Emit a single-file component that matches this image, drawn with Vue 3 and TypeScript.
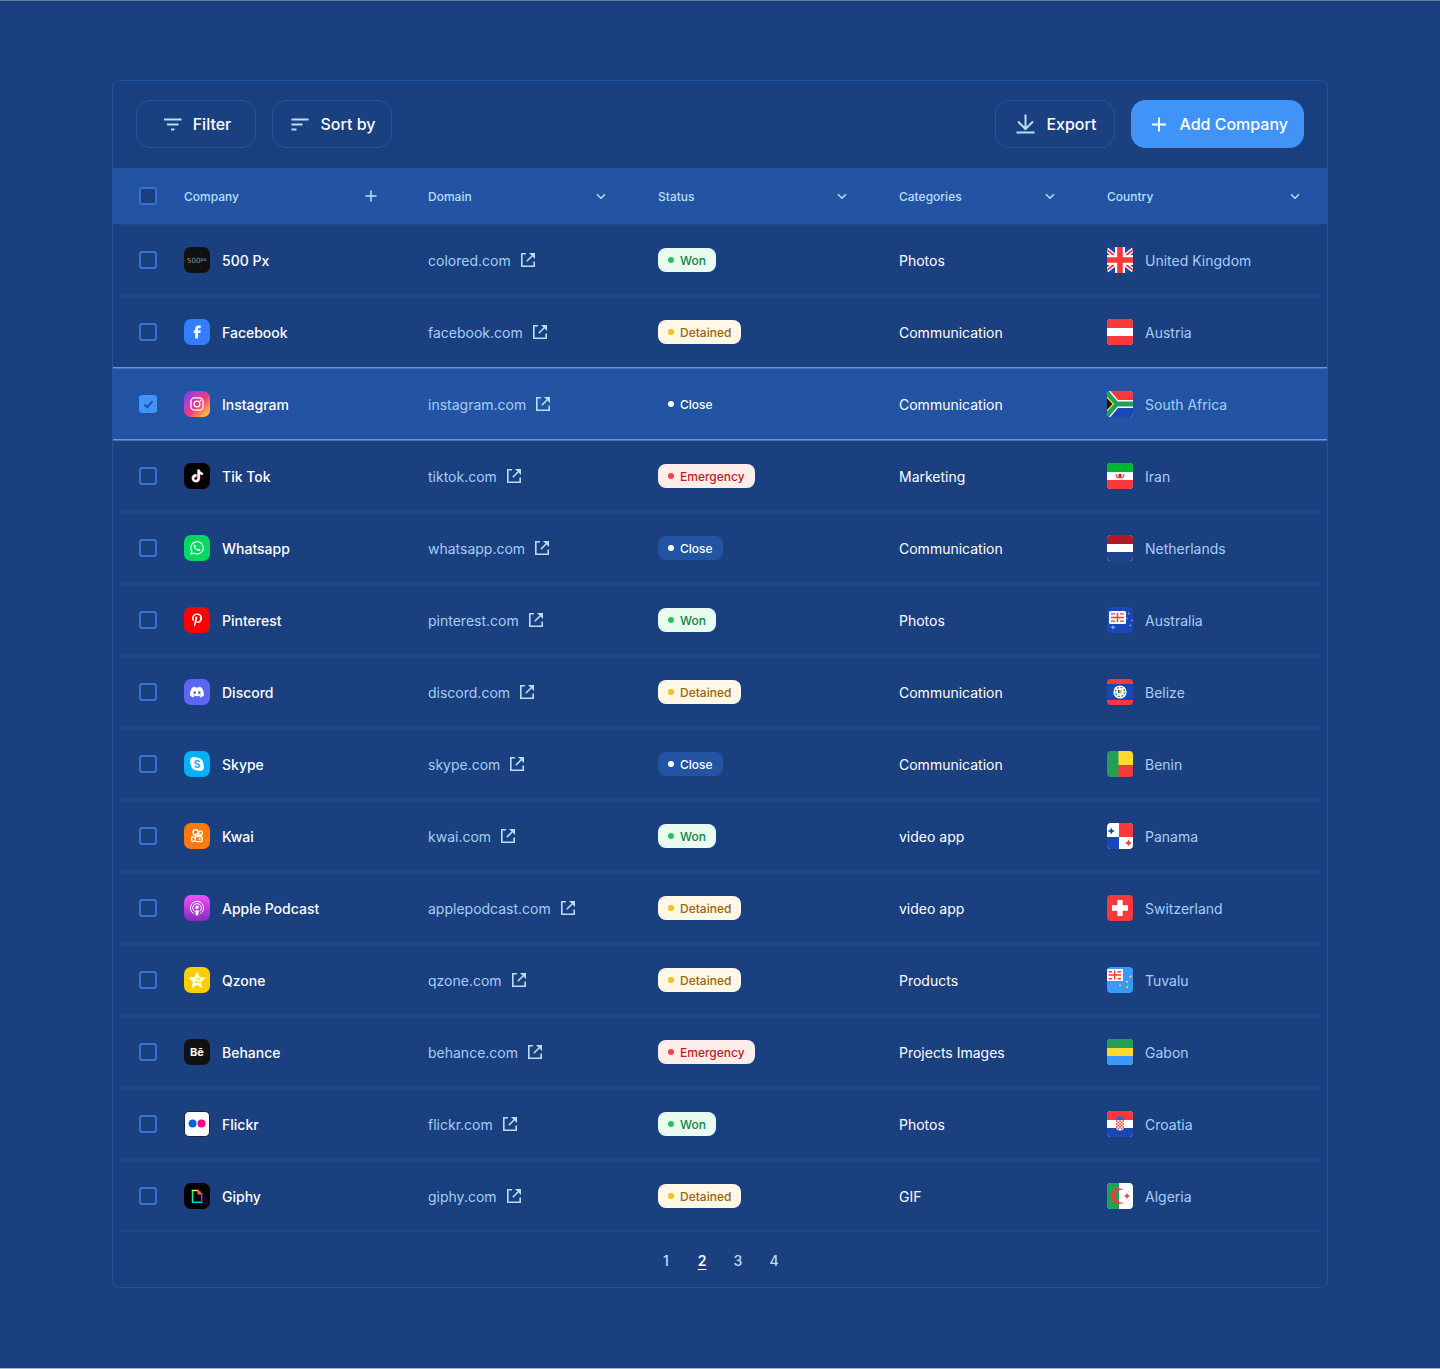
<script setup lang="ts">
import { computed, ref } from 'vue'

type Status = 'Won' | 'Detained' | 'Close' | 'Emergency'

interface Company {
  name: string
  logo: string
  domain: string
  status: Status
  category: string
  country: string
}

const companies: Company[] = [
  { name: '500 Px', logo: 'px500', domain: 'colored.com', status: 'Won', category: 'Photos', country: 'United Kingdom' },
  { name: 'Facebook', logo: 'facebook', domain: 'facebook.com', status: 'Detained', category: 'Communication', country: 'Austria' },
  { name: 'Instagram', logo: 'instagram', domain: 'instagram.com', status: 'Close', category: 'Communication', country: 'South Africa' },
  { name: 'Tik Tok', logo: 'tiktok', domain: 'tiktok.com', status: 'Emergency', category: 'Marketing', country: 'Iran' },
  { name: 'Whatsapp', logo: 'whatsapp', domain: 'whatsapp.com', status: 'Close', category: 'Communication', country: 'Netherlands' },
  { name: 'Pinterest', logo: 'pinterest', domain: 'pinterest.com', status: 'Won', category: 'Photos', country: 'Australia' },
  { name: 'Discord', logo: 'discord', domain: 'discord.com', status: 'Detained', category: 'Communication', country: 'Belize' },
  { name: 'Skype', logo: 'skype', domain: 'skype.com', status: 'Close', category: 'Communication', country: 'Benin' },
  { name: 'Kwai', logo: 'kwai', domain: 'kwai.com', status: 'Won', category: 'video app', country: 'Panama' },
  { name: 'Apple Podcast', logo: 'podcast', domain: 'applepodcast.com', status: 'Detained', category: 'video app', country: 'Switzerland' },
  { name: 'Qzone', logo: 'qzone', domain: 'qzone.com', status: 'Detained', category: 'Products', country: 'Tuvalu' },
  { name: 'Behance', logo: 'behance', domain: 'behance.com', status: 'Emergency', category: 'Projects Images', country: 'Gabon' },
  { name: 'Flickr', logo: 'flickr', domain: 'flickr.com', status: 'Won', category: 'Photos', country: 'Croatia' },
  { name: 'Giphy', logo: 'giphy', domain: 'giphy.com', status: 'Detained', category: 'GIF', country: 'Algeria' },
]

const columns = ['Domain', 'Status', 'Categories', 'Country']
const pages = [1, 2, 3, 4]
const currentPage = ref(2)
const selected = ref<string[]>(['Instagram'])

const allSelected = computed<boolean>({
  get: () => selected.value.length === companies.length,
  set: (on) => {
    selected.value = on ? companies.map((c) => c.name) : []
  },
})

const noteShape =
  'M12.525.02c1.31-.02 2.61-.01 3.91-.02.08 1.53.63 3.09 1.75 4.17 1.12 1.11 2.7 1.62 4.24 1.79v4.03c-1.44-.05-2.89-.35-4.2-.97-.57-.26-1.1-.59-1.62-.93-.01 2.92.01 5.84-.02 8.75-.08 1.4-.54 2.79-1.35 3.94-1.31 1.92-3.58 3.17-5.91 3.21-1.43.08-2.86-.31-4.08-1.03-2.02-1.19-3.44-3.37-3.65-5.71-.02-.5-.03-1-.01-1.49.18-1.9 1.12-3.72 2.58-4.96 1.66-1.44 3.98-2.13 6.15-1.72.02 1.48-.04 2.96-.04 4.44-.99-.32-2.15-.23-3.02.37-.63.41-1.11 1.04-1.36 1.75-.21.51-.15 1.07-.14 1.61.24 1.64 1.82 3.02 3.5 2.87 1.12-.01 2.19-.66 2.77-1.61.19-.33.4-.67.41-1.06.1-1.79.06-3.57.07-5.36.01-4.03-.01-8.05.02-12.07z'

// Inner markup of the 26 × 26 company tiles
const logos: Record<string, string> = {
  px500: `<rect width="26" height="26" fill="#111"/>
    <g fill="#f2f2f2" font-family="'DejaVu Sans', Inter, sans-serif" font-weight="200"><text x="3" y="15.6" font-size="7">500</text><text x="16.6" y="13.6" font-size="5">px</text></g>`,
  facebook: `<rect width="26" height="26" fill="#337eff"/>
    <path transform="translate(5 4.8) scale(.68)" fill="#fff" d="M9.198 21.5h4v-8.01h3.604l.396-3.98h-4V7.5a1 1 0 0 1 1-1h3v-4h-3a5 5 0 0 0-5 5v2.01h-2l-.396 3.98h2.396v8.01Z"/>`,
  instagram: `<defs><linearGradient id="ig" x1="0" y1="0" x2="1" y2="1"><stop offset="0" stop-color="#6a3be8"/><stop offset=".3" stop-color="#c03bc8"/><stop offset=".55" stop-color="#f43b77"/><stop offset=".8" stop-color="#fb9c50"/><stop offset="1" stop-color="#ffe35c"/></linearGradient></defs>
    <rect width="26" height="26" fill="url(#ig)"/>
    <g fill="none" stroke="#fff" stroke-width="1.3"><rect x="6.9" y="6.9" width="12.2" height="12.2" rx="3.6"/><circle cx="13" cy="13" r="2.9"/></g><circle cx="16.5" cy="9.5" r=".9" fill="#fff"/>`,
  tiktok: `<rect width="26" height="26" fill="#000"/>
    <path transform="translate(6.7 6.3) scale(.52)" fill="#25f4ee" d="${noteShape}"/>
    <path transform="translate(7.7 7.1) scale(.52)" fill="#fe2c55" d="${noteShape}"/>
    <path transform="translate(7.2 6.7) scale(.52)" fill="#fff" d="${noteShape}"/>`,
  whatsapp: `<rect width="26" height="26" fill="#00d95f"/>
    <path transform="translate(6.2 6) scale(.57)" fill="#fff" d="M17.472 14.382c-.297-.149-1.758-.867-2.03-.967-.273-.099-.471-.148-.67.15-.197.297-.767.966-.94 1.164-.173.199-.347.223-.644.075-.297-.15-1.255-.463-2.39-1.475-.883-.788-1.48-1.761-1.653-2.059-.173-.297-.018-.458.13-.606.134-.133.298-.347.446-.52.149-.174.198-.298.298-.497.099-.198.05-.371-.025-.52-.075-.149-.669-1.612-.916-2.207-.242-.579-.487-.5-.669-.51-.173-.008-.371-.01-.57-.01-.198 0-.52.074-.792.372-.272.297-1.04 1.016-1.04 2.479 0 1.462 1.065 2.875 1.213 3.074.149.198 2.096 3.2 5.077 4.487.709.306 1.262.489 1.694.625.712.227 1.36.195 1.871.118.571-.085 1.758-.719 2.006-1.413.248-.694.248-1.289.173-1.413-.074-.124-.272-.198-.57-.347m-5.421 7.403h-.004a9.87 9.87 0 01-5.031-1.378l-.361-.214-3.741.982.998-3.648-.235-.374a9.86 9.86 0 01-1.51-5.26c.001-5.45 4.436-9.884 9.888-9.884 2.64 0 5.122 1.03 6.988 2.898a9.825 9.825 0 012.893 6.994c-.003 5.45-4.437 9.884-9.885 9.884m8.413-18.297A11.815 11.815 0 0012.05 0C5.495 0 .16 5.335.157 11.892c0 2.096.547 4.142 1.588 5.945L.057 24l6.305-1.654a11.882 11.882 0 005.683 1.448h.005c6.554 0 11.89-5.335 11.893-11.893a11.821 11.821 0 00-3.48-8.413Z"/>`,
  pinterest: `<rect width="26" height="26" fill="#f00"/>
    <path transform="translate(8 6.4) scale(.0262)" fill="#fff" d="M204 6.5C101.4 6.5 0 74.9 0 185.6 0 256 39.6 296 63.6 296c9.900 0 15.600-27.600 15.600-35.400 0-9.300-23.700-29.100-23.700-67.800 0-80.400 61.200-137.400 140.400-137.400 68.100 0 118.500 38.700 118.500 109.800 0 53.100-21.300 152.700-90.300 152.700-24.900 0-46.200-18-46.200-43.800 0-37.800 26.400-74.400 26.400-113.400 0-66.200-93.900-54.200-93.900 25.800 0 16.800 2.100 35.400 9.600 50.700-13.800 59.400-42 147.900-42 209.100 0 18.900 2.700 37.500 4.500 56.400 3.400 3.800 1.700 3.400 6.900 1.500 50.400-69 48.600-82.500 71.400-172.800 12.300 23.400 44.100 36 69.300 36 106.200 0 153.900-103.500 153.900-196.800C384 71.300 298.200 6.500 204 6.500z"/>`,
  discord: `<rect width="26" height="26" fill="#5b66f2"/>
    <path transform="translate(6 6.2) scale(.58)" fill="#fff" d="M20.317 4.3698a19.7913 19.7913 0 00-4.8851-1.5152.0741.0741 0 00-.0785.0371c-.211.3753-.4447.8648-.6083 1.2495-1.8447-.2762-3.68-.2762-5.4868 0-.1636-.3933-.4058-.8742-.6177-1.2495a.077.077 0 00-.0785-.037 19.7363 19.7363 0 00-4.8852 1.515.0699.0699 0 00-.0321.0277C.5334 9.0458-.319 13.5799.0992 18.0578a.0824.0824 0 00.0312.0561c2.0528 1.5076 4.0413 2.4228 5.9929 3.0294a.0777.0777 0 00.0842-.0276c.4616-.6304.8731-1.2952 1.226-1.9942a.076.076 0 00-.0416-.1057c-.6528-.2476-1.2743-.5495-1.8722-.8923a.077.077 0 01-.0076-.1277c.1258-.0943.2517-.1923.3718-.2914a.0743.0743 0 01.0776-.0105c3.9278 1.7933 8.18 1.7933 12.0614 0a.0739.0739 0 01.0785.0095c.1202.099.246.1981.3728.2924a.077.077 0 01-.0066.1276 12.2986 12.2986 0 01-1.873.8914.0766.0766 0 00-.0407.1067c.3604.698.7719 1.3628 1.225 1.9932a.076.076 0 00.0842.0286c1.961-.6067 3.9495-1.5219 6.0023-3.0294a.077.077 0 00.0313-.0552c.5004-5.177-.8382-9.6739-3.5485-13.6604a.061.061 0 00-.0312-.0286zM8.02 15.3312c-1.1825 0-2.1569-1.0857-2.1569-2.419 0-1.3332.9555-2.4189 2.157-2.4189 1.2108 0 2.1757 1.0952 2.1568 2.419 0 1.3332-.9555 2.4189-2.1569 2.4189zm7.9748 0c-1.1825 0-2.1569-1.0857-2.1569-2.419 0-1.3332.9554-2.4189 2.1569-2.4189 1.2108 0 2.1757 1.0952 2.1568 2.419 0 1.3332-.946 2.4189-2.1568 2.4189Z"/>`,
  skype: `<rect width="26" height="26" fill="#00b2f5"/>
    <g fill="#fff"><circle cx="13" cy="13" r="6.4"/><circle cx="9.8" cy="9.8" r="3.7"/><circle cx="16.2" cy="16.2" r="3.7"/></g>
    <text x="13" y="16.6" text-anchor="middle" font-family="Inter, sans-serif" font-weight="700" font-size="10" fill="#00b2f5">S</text>`,
  kwai: `<rect width="26" height="26" fill="#ff7a0c"/>
    <g fill="none" stroke="#fff" stroke-width="1.4"><circle cx="11.5" cy="9.2" r="2.5"/><circle cx="16.5" cy="9.8" r="1.9"/><rect x="11.2" y="13.6" width="7" height="5" rx="1.4"/><path d="M11 17.6 9.2 18.4a1.2 1.2 0 0 1-1.6-1.1v-2.4a1.2 1.2 0 0 1 1.6-1.1l1.8.8"/></g>
    <circle cx="15.6" cy="16.1" r="1" fill="#fff"/><path d="M10 12.4h8" stroke="#fff" stroke-width="1"/>`,
  podcast: `<defs><linearGradient id="pod" x1="0" y1="0" x2="0" y2="1"><stop offset="0" stop-color="#f150fb"/><stop offset="1" stop-color="#852cc2"/></linearGradient></defs>
    <rect width="26" height="26" fill="url(#pod)"/>
    <g fill="none" stroke="#fff" stroke-width="1"><path d="M10.2 18.9a6.6 6.6 0 1 1 5.6 0"/><path d="M10.4 16.4a4.3 4.3 0 1 1 5.2 0"/></g>
    <circle cx="13" cy="12.2" r="1.7" fill="#fff"/><path d="M11.2 15.6q1.8-1.2 3.6 0l-.6 4.400q-1.2 1.100-2.400 0z" fill="#fff"/>`,
  qzone: `<rect width="26" height="26" fill="#ffce00"/>
    <path d="m13 5 2.4 5.3 5.7.6-4.3 3.9 1.2 5.8-5-3-5 3 1.2-5.8-4.3-3.9 5.7-.6z" fill="#fff" stroke="#fff" stroke-linejoin="round" stroke-width=".6"/>
    <path d="M11.500 11.600q2.500-.500 5 .100l-5 3.900q3 .500 6-.300" fill="none" stroke="#ffce00" stroke-width=".8"/>`,
  behance: `<rect width="26" height="26" fill="#111"/>
    <text x="13" y="17" text-anchor="middle" font-family="Inter, sans-serif" font-weight="700" font-size="11" fill="#fff">Bē</text>`,
  flickr: `<rect width="26" height="26" fill="#1b2233"/><rect x="1" y="1" width="24" height="24" rx="4" fill="#fff"/>
    <circle cx="8.6" cy="12.4" r="4" fill="#0063dc"/><circle cx="17.5" cy="12.4" r="4" fill="#ff0084"/>`,
  giphy: `<rect width="26" height="26" fill="#000"/>
    <path fill="#00ff99" d="M7.8 7h1.500v12H7.800z"/><path fill="#00ccff" d="M7.800 18.400h10.600v1.500H7.800z"/><path fill="#9933ff" d="M16.900 11.400h1.500v7h-1.500z"/><path fill="#fff35c" d="M7.800 6.800H14v1.500H7.800z"/><path fill="#ff6666" d="M13.600 6.800H15.200V8.300h1.600v1.600h1.600v1.700h-4.800z"/>`,
}

// Inner markup of the 26 × 26 flags, keyed by country
const flags: Record<string, string> = {
  'United Kingdom': `<rect width="26" height="26" fill="#1a47b8"/>
    <path d="m-1 2 28 22M27 2-1 24" stroke="#fff" stroke-width="4.600"/><path d="m-1 2 28 22M27 2-1 24" stroke="#f93939" stroke-width="1.800"/>
    <path d="M13 0v26M0 13h26" stroke="#fff" stroke-width="10"/><path d="M13 0v26M0 13h26" stroke="#f93939" stroke-width="5.600"/>`,
  Austria: `<rect width="26" height="26" fill="#fff"/><path fill="#f93939" d="M0 0h26v9H0zM0 17h26v9H0z"/>`,
  'South Africa': `<rect width="26" height="26" fill="#fff"/><path fill="#f93939" d="M3.500 0H26v9H11z"/><path fill="#1a47b8" d="M3.500 26H26v-9H11z"/>
    <path fill="#249f58" d="M0 0h1.600l9 10.600H26v4.800H10.600l-9 10.600H0z"/><path fill="#ffda2c" d="M0 5.400 7.200 13 0 20.600z"/><path fill="#151515" d="M0 7.200 5.400 13 0 18.800z"/>`,
  Iran: `<rect width="26" height="26" fill="#fff"/><path fill="#00b534" d="M0 0h26v9H0z"/><path fill="#f93939" d="M0 17h26v9H0z"/>
    <g fill="none" stroke="#f24a4a" stroke-width="1.200"><path d="M10 11.200c-2 1.600-.6 3.800 3 3.800s5-2.200 3-3.800"/></g><ellipse cx="13" cy="12.600" rx="1.800" ry="1.900" fill="#d33"/><path d="M13 10.600v4" stroke="#8d1b1b" stroke-width=".8"/>`,
  Netherlands: `<rect width="26" height="26" fill="#fff"/><path fill="#af1a24" d="M0 0h26v9H0z"/><path fill="#1e448d" d="M0 17h26v9H0z"/>`,
  Australia: `<rect width="26" height="26" fill="#1a47b8"/><rect x="2" y="4" width="17" height="13" rx="1.600" fill="#fff"/>
    <path d="M10.500 6v9M4 10.500h13" stroke="#f93939" stroke-width="1.500"/><path d="M4 6.900h4M13 6.900h4M4 14.100h4M13 14.100h4" stroke="#f93939" stroke-width="1.300"/>
    <g fill="#8fa9e0"><path d="m6 17.800.8 1.700 1.800.8-1.800.8L6 22.800l-.8-1.700-1.800-.8 1.800-.8z"/><circle cx="21.600" cy="6.400" r=".9"/><circle cx="19.900" cy="11.500" r=".8"/><circle cx="25" cy="13.400" r=".9"/><circle cx="23.400" cy="18.400" r=".9"/></g>`,
  Belize: `<rect width="26" height="26" fill="#1a47b8"/><path fill="#f93939" d="M0 0h26v5H0zM0 21h26v5H0z"/><circle cx="13" cy="13" r="6.600" fill="#fff"/>
    <circle cx="13" cy="13" r="4.600" fill="none" stroke="#249f58" stroke-width="1.400" stroke-dasharray="1.900 1.700"/><path fill="#3a4a5c" d="M11 11h1.500v3H11z"/><path fill="#e7b13c" d="M13.200 11h1.600v3h-1.600z"/><path fill="#c9c9c9" d="M10.800 14.400h4.400v1h-4.400z"/>`,
  Benin: `<rect width="26" height="26" fill="#249f58"/><path fill="#ffda2c" d="M11.500 0H26v14H11.500z"/><path fill="#f93939" d="M11.500 14H26v12H11.500z"/>`,
  Panama: `<rect width="26" height="26" fill="#fff"/><path fill="#f93939" d="M12 0h14v14H12z"/><path fill="#1a47b8" d="M0 14h12v12H0z"/>
    <path fill="#1a47b8" d="m4.300 5 .9 2.100 2.200.9-2.200.9-.9 2.100-.9-2.100L1.200 8l2.200-.9z" stroke="#1a47b8" stroke-width=".5"/><path fill="#f93939" d="m21.500 17 .9 2.100 2.200.9-2.200.9-.9 2.100-.9-2.100-2.200-.9 2.200-.9z" stroke="#f93939" stroke-width=".5"/>`,
  Switzerland: `<rect width="26" height="26" fill="#f93939"/><path d="M13 5v16M5 13h16" stroke="#fff" stroke-width="5.400"/>`,
  Tuvalu: `<rect width="26" height="26" fill="#3a99ff"/><path fill="#fff" d="M0 2h16v12H0z"/>
    <path d="M7.700 3.500v9M1.500 8h12.500" stroke="#f93939" stroke-width="1.500"/><path d="M1.500 4.700h3.500M10.500 4.700H14M1.500 11.700h3.500M10.500 11.700H14" stroke="#f93939" stroke-width="1.400"/>
    <g fill="#ffda2c"><circle cx="23.500" cy="9.600" r="1.100"/><circle cx="20" cy="14.800" r="1"/><circle cx="13" cy="18.500" r="1"/><circle cx="20" cy="20" r="1"/></g>`,
  Gabon: `<rect width="26" height="26" fill="#ffda2c"/><path fill="#249f58" d="M0 0h26v9H0z"/><path fill="#3a99ff" d="M0 17h26v9H0z"/>`,
  Croatia: `<rect width="26" height="26" fill="#fff"/><path fill="#f93939" d="M0 0h26v9H0z"/><path fill="#1a47b8" d="M0 17h26v9H0z"/>
    <path fill="#1a6bd8" d="m8.800 6 2.100.3L13 5l2.100 1.300 2.100-.3-.7 3H9.500z"/><path fill="#fff" d="M9 9h8v6.500a4 4 0 0 1-8 0z"/>
    <path d="M9 10h8M9 13h8M9 16h8" stroke="#f93939" stroke-width="1.500" stroke-dasharray="1.600 1.600"/><path d="M10.600 11.500H17M10.600 14.500H17M10.600 17.500H16" stroke="#f93939" stroke-width="1.500" stroke-dasharray="1.600 1.600"/>`,
  Algeria: `<rect width="26" height="26" fill="#fff"/><path fill="#249f58" d="M0 0h12v26H0z"/>
    <path fill="#f93939" d="M17 7A7.900 7.900 0 1 0 17 19.200 6.500 6.500 0 1 1 17 7z"/><path fill="#f93939" d="m20 10.600.9 1.700 1.700.8-1.700.8-.9 1.700-.9-1.700-1.700-.8 1.700-.8z" stroke="#f93939" stroke-width=".5"/>`,
}
</script>

<template>
  <main class="page">
    <section class="card">
      <header class="toolbar">
        <div class="group">
          <button type="button" class="btn">
            <svg class="icon" viewBox="0 0 24 24"><path d="M3 7.500h17.500M6 12.500h11.500M10 17.500h3.500" /></svg>
            Filter
          </button>
          <button type="button" class="btn">
            <svg class="icon" viewBox="0 0 24 24"><path d="M2.500 7.500h17M2.500 12.500h11M2.500 17.500h5" /></svg>
            Sort by
          </button>
        </div>
        <div class="group">
          <button type="button" class="btn">
            <svg class="icon" viewBox="0 0 24 24"><path d="M11.500 2.500v14M4 9.500l7.500 7.500L19 9.500M2.500 20.500h18" /></svg>
            Export
          </button>
          <button type="button" class="btn primary">
            <svg class="icon" viewBox="0 0 24 24"><path d="M12 5.500v14M5 12.500h14" /></svg>
            Add Company
          </button>
        </div>
      </header>

      <table class="companies">
        <colgroup>
          <col class="col-check" />
          <col class="col-company" />
          <col class="col-domain" />
          <col class="col-status" />
          <col class="col-category" />
          <col class="col-country" />
        </colgroup>
        <thead>
          <tr>
            <th class="check-cell" scope="col">
              <input v-model="allSelected" type="checkbox" class="check" aria-label="Select all companies" />
            </th>
            <th scope="col">
              <div class="head">
                <span>Company</span>
                <button type="button" class="head-btn" aria-label="Add a column">
                  <svg viewBox="0 0 18 18"><path d="M9 3.500v11M3.500 9h11" /></svg>
                </button>
              </div>
            </th>
            <th v-for="column in columns" :key="column" scope="col">
              <div class="head">
                <span>{{ column }}</span>
                <button type="button" class="head-btn" :aria-label="`${column} options`">
                  <svg viewBox="0 0 18 18"><path d="m5 7.200 4 4 4-4" /></svg>
                </button>
              </div>
            </th>
          </tr>
        </thead>
        <tbody>
          <tr v-for="company in companies" :key="company.name" :class="{ selected: selected.includes(company.name) }">
            <td class="check-cell">
              <input v-model="selected" type="checkbox" class="check" :value="company.name" :aria-label="`Select ${company.name}`" />
            </td>
            <td>
              <div class="item name">
                <svg class="logo" viewBox="0 0 26 26" aria-hidden="true" v-html="logos[company.logo]"></svg>
                <span>{{ company.name }}</span>
              </div>
            </td>
            <td>
              <a class="domain" :href="`https://${company.domain}`">
                <span>{{ company.domain }}</span>
                <svg class="external" viewBox="0 0 14 14" aria-hidden="true">
                  <path class="line" d="M5 .8H.8v12.400h12.400V8.500M5.800 8.200 11 3" />
                  <path class="tip" d="M8 0h6v6z" />
                </svg>
              </a>
            </td>
            <td>
              <span class="badge" :class="company.status.toLowerCase()">{{ company.status }}</span>
            </td>
            <td>{{ company.category }}</td>
            <td>
              <div class="item country">
                <svg class="flag" viewBox="0 0 26 26" aria-hidden="true" v-html="flags[company.country]"></svg>
                <span>{{ company.country }}</span>
              </div>
            </td>
          </tr>
        </tbody>
      </table>

      <nav class="pagination" aria-label="Pages">
        <button
          v-for="page in pages"
          :key="page"
          type="button"
          class="page-btn"
          :class="{ active: page === currentPage }"
          @click="currentPage = page"
        >
          {{ page }}
        </button>
      </nav>
    </section>
  </main>
</template>

<style>
body {
  margin: 0;
  background: #1a407f;
}
</style>

<style scoped>
.page {
  box-sizing: border-box;
  min-height: 100vh;
  padding: 79px 112px 80px;
  border-top: 1px solid #5f7ba8;
  border-bottom: 1px solid #a3b3cc;
  background: #1a407f;
  color: #fff;
  font-family: Inter, 'Liberation Sans', sans-serif;
  font-size: 14px;
  line-height: 21px;
}

.card {
  border-radius: 8px;
  outline: 1px solid #2354a3;
  outline-offset: -1px;
}

.toolbar {
  display: flex;
  justify-content: space-between;
  padding: 20px 24px;
}

.group {
  display: flex;
  gap: 16px;
}

button {
  padding: 0;
  border: 0;
  background: none;
  color: inherit;
  font: inherit;
  cursor: pointer;
}

.btn {
  display: flex;
  align-items: center;
  justify-content: center;
  gap: 8px;
  box-sizing: border-box;
  min-width: 120px;
  height: 48px;
  padding: 0 15px;
  border: 1px solid #2354a3;
  border-radius: 14px;
  font-size: 16px;
  font-weight: 500;
  line-height: 24px;
}

.btn.primary {
  border-color: #4094f7;
  background: #4094f7;
}

.icon {
  width: 24px;
  height: 24px;
  fill: none;
  stroke: #badeff;
  stroke-width: 2;
}

.primary .icon {
  stroke: #fff;
}

.companies {
  width: 100%;
  table-layout: fixed;
  border-collapse: separate;
  border-spacing: 0;
}

.col-check {
  width: 72px;
}

.col-company {
  width: 244px;
}

.col-domain {
  width: 230px;
}

.col-status {
  width: 241px;
}

.col-category {
  width: 208px;
}

.col-country {
  width: 221px;
}

th,
td {
  box-sizing: border-box;
  padding: 0 48px 0 0;
  text-align: left;
  vertical-align: middle;
}

th {
  height: 56px;
  background: #2354a3;
  color: #badeff;
  font-size: 12px;
  font-weight: 500;
}

td {
  height: 72px;
  box-shadow: inset 0 1px #1e498f, inset 0 -1px #1e498f;
}

th:last-child,
td:last-child {
  padding-right: 24px;
}

.check-cell {
  padding: 0 0 0 27px;
}

.selected td {
  background: #2354a3;
  box-shadow: inset 0 1px #4674bc, inset 0 -1px #6c97d6;
}

tr:has(+ .selected) td {
  box-shadow: inset 0 1px #1e498f, inset 0 -1px #6c97d6;
}

.selected + tr td {
  box-shadow: inset 0 1px #4674bc, inset 0 -1px #1e498f;
}

.check {
  display: grid;
  place-content: center;
  box-sizing: border-box;
  width: 18px;
  height: 18px;
  margin: 0;
  border: 2px solid #3672d2;
  border-radius: 3px;
  appearance: none;
  background: #1a407f;
}

.check:checked {
  border-color: #4094f7;
  background: #4094f7;
}

.check:checked::after {
  content: '';
  width: 3px;
  height: 7px;
  margin-bottom: 2px;
  border: solid #1f509f;
  border-width: 0 2px 2px 0;
  transform: rotate(42deg);
}

.head {
  display: flex;
  align-items: center;
  justify-content: space-between;
}

.head-btn {
  width: 18px;
  height: 18px;
}

.head-btn svg {
  display: block;
  fill: none;
  stroke: #badeff;
  stroke-width: 1.5;
}

.item {
  display: flex;
  align-items: center;
  gap: 12px;
}

.name {
  font-weight: 500;
}

.logo,
.flag {
  flex: none;
  width: 26px;
  height: 26px;
  border-radius: 7px;
  overflow: hidden;
}

.flag {
  border-radius: 4px;
}

.domain {
  display: flex;
  align-items: center;
  gap: 10px;
  width: fit-content;
  color: #a6cdf8;
  text-decoration: none;
}

.external {
  width: 14px;
  height: 14px;
}

.external .line {
  fill: none;
  stroke: #badeff;
  stroke-width: 1.6;
}

.external .tip {
  fill: #badeff;
}

.badge {
  display: flex;
  align-items: center;
  gap: 6px;
  width: fit-content;
  height: 24px;
  padding: 0 10px;
  border-radius: 8px;
  font-size: 12px;
  font-weight: 500;
}

.badge::before {
  content: '';
  width: 6px;
  height: 6px;
  border-radius: 50%;
  background: #fff;
}

.won {
  background: #e9fcf0;
  color: #14803c;
}

.won::before {
  background: #22c55e;
}

.detained {
  background: #fff8e7;
  color: #a65f0a;
}

.detained::before {
  background: #fbbf15;
}

.emergency {
  background: #ffedeb;
  color: #c01c1c;
}

.emergency::before {
  background: #ef4444;
}

.close {
  background: #2354a3;
}

.country {
  color: #a6cdf8;
}

.pagination {
  display: flex;
  align-items: center;
  justify-content: center;
  gap: 24px;
  height: 56px;
}

.page-btn {
  width: 12px;
  color: #badeff;
  font-weight: 500;
}

.page-btn.active {
  color: #fff;
  font-weight: 600;
  text-decoration: underline;
  text-underline-offset: 3px;
}
</style>
